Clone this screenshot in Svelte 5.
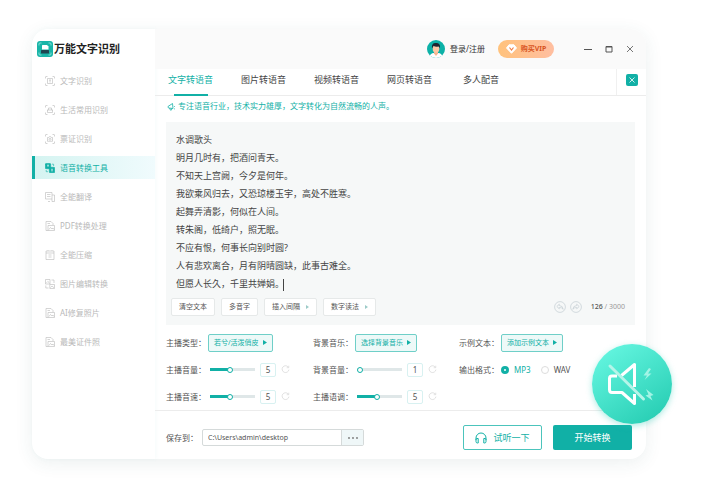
<script>
  const nav = [
    { name: '文字识别', icon: 'text' },
    { name: '生活常用识别', icon: 'life' },
    { name: '票证识别', icon: 'ticket' },
    { name: '语音转换工具', icon: 'voice' },
    { name: '全能翻译', icon: 'translate' },
    { name: 'PDF转换处理', icon: 'file' },
    { name: '全能压缩', icon: 'zip' },
    { name: '图片编辑转换', icon: 'picture' },
    { name: 'AI修复照片', icon: 'file' },
    { name: '最美证件照', icon: 'file' }
  ];
  const tabs = ['文字转语音', '图片转语音', '视频转语音', '网页转语音', '多人配音'];
  const tools = [
    { name: '清空文本', menu: false },
    { name: '多音字', menu: false },
    { name: '插入间隔', menu: true },
    { name: '数字读法', menu: true }
  ];
  let active = $state(3);
  let tab = $state(0);
  let format = $state('MP3');
  let path = $state('C:\\Users\\admin\\desktop');
  let poem = $state(
    [
      '水调歌头',
      '明月几时有，把酒问青天。',
      '不知天上宫阙，今夕是何年。',
      '我欲乘风归去，又恐琼楼玉宇，高处不胜寒。',
      '起舞弄清影，何似在人间。',
      '转朱阁，低绮户，照无眠。',
      '不应有恨，何事长向别时圆?',
      '人有悲欢离合，月有阴晴圆缺，此事古难全。',
      '但愿人长久，千里共婵娟。'
    ].join('\n')
  );
  let levels = $state({ volume: 5, music: 1, speed: 5, tone: 5 });
  const fill = (v) => ((v - 1) / 9) * 100;
</script>

{#snippet slider(id, label)}
  <div class="field">
    <label for={id}>{label}：</label>
    <input
      class="range"
      {id}
      type="range"
      min="1"
      max="10"
      bind:value={levels[id]}
      style="--fill: {fill(levels[id])}%"
    />
    <output class="num" for={id}>{levels[id]}</output>
    <button class="reset" aria-label="重置{label}" onclick={() => (levels[id] = 5)}>
      <svg viewBox="0 0 10 10" width="9" height="9">
        <path d="M8 2.2A3.8 3.8 0 1 0 8.8 5.2M8.6.8V3H6.4" />
      </svg>
    </button>
  </div>
{/snippet}

{#snippet picker(label, value)}
  <div class="field">
    <span class="label">{label}：</span>
    <button class="pick">
      {value}
      <svg viewBox="0 0 4 5" width="4" height="5"><path d="M0 0L4 2.5L0 5Z" fill="currentColor" /></svg>
    </button>
  </div>
{/snippet}

<div class="stage">
  <div class="window">
    <aside>
      <h1>
        <svg viewBox="0 0 16 16" width="16" height="16">
          <rect width="16" height="16" rx="3" fill="#19b5a8" />
          <path d="M2 4.5V3Q2 2 3 2H4.500M11.500 2H13Q14 2 14 3V4.500M2 11.500V13Q2 14 3 14H4.500M11.500 14H13Q14 14 14 13V11.500" fill="none" stroke="#9be6de" stroke-width=".8" />
          <path d="M5 4.500Q5 4 5.500 4H10L11.500 5.500V8.500H5Z" fill="#fff" />
          <rect x="4" y="9" width="8" height="3.500" rx=".6" fill="#1c4550" />
        </svg>
        <span>万能文字识别</span>
      </h1>
      <nav>
        {#each nav as item, i}
          <button class="item" class:on={i === active} onclick={() => (active = i)}>
            <svg viewBox="0 0 10 10" width="10" height="10">
              {#if item.icon === 'text' || item.icon === 'life' || item.icon === 'ticket'}
                <path d="M.5 2.500V1Q.5.5 1 .5H2.500M7.500.5H9Q9.500.5 9.500 1V2.500M9.500 7.500V9Q9.500 9.500 9 9.500H7.500M2.500 9.500H1Q.5 9.500.5 9V7.500" />
                {#if item.icon === 'text'}
                  <path d="M2.500 2.500H7.500V7.500H2.500ZM4 4H6M5 4V6.500" />
                {:else if item.icon === 'life'}
                  <path d="M2.500 5V7.500H7.500V5M2 5H8M3.500 5V3H6.500V5" />
                {:else}
                  <path d="M2.500 3.500H3.700L4.200 2.700H5.800L6.300 3.500H7.500V7.300H2.500Z" />
                  <circle cx="5" cy="5.300" r="1" />
                {/if}
              {:else if item.icon === 'voice'}
                <rect x=".3" y=".5" width="5.400" height="5.200" rx=".8" fill="currentColor" />
                <rect x="4.300" y="4.300" width="5.400" height="5.400" rx=".8" fill="currentColor" />
                <path d="M7 1.200H8.600V3M1.200 7V8.700H3" />
                <path d="M2 2.200H4M3 2.200V4M6 6.300H8M6 7.800H8" stroke="#fff" />
              {:else if item.icon === 'translate'}
                <path d="M7 7V9.500H9.500V3H7M.5.5H7V7H.5ZM2 2.500H5.500M2 4.500H5.500M3 9.500H5" />
              {:else if item.icon === 'zip'}
                <path d="M1 1H9V9.500H1ZM1 3H9M3.500 5H6.500M3.500 7H6.500M3 .2V1M7 .2V1" />
              {:else if item.icon === 'picture'}
                <path d="M.5.5H5V5H.5ZM4.800 5.500H9.500V9.500H4.800ZM6.500 1H9V4M.8 6.500V9H3.500M1.500 3.800L2.800 2.500L4.500 4M5.500 8.500L7 7L9 8.800" />
              {:else}
                <path d="M3 9.500H1V.5H6L8 2.500V4M3 4.500H9.500V9.500H3ZM4 8.500L5.500 6.500L7 8L8 7L9 8.500M2.500 2.500H5" />
              {/if}
            </svg>
            <span>{item.name}</span>
          </button>
        {/each}
      </nav>
    </aside>

    <main>
      <header>
        <button class="user">
          <svg viewBox="0 0 18 18" width="18" height="18">
            <defs><clipPath id="face"><circle cx="9" cy="9" r="9" /></clipPath></defs>
            <g clip-path="url(#face)">
              <rect width="18" height="18" fill="#0cb1a7" />
              <path d="M2 18Q3 13 7 13H11Q15 13 16 18Z" fill="#fff" />
              <path d="M7 10H11V13.500L9 16L7 13.500Z" fill="#f5b590" />
              <ellipse cx="9" cy="8.800" rx="3.300" ry="3.900" fill="#fbc8a5" />
              <path d="M5 8.500Q4.200 3 8.500 3Q13.800 2.500 13 8.500L12 6.500Q8 7 6.500 5.800Q6 7 5 8.500Z" fill="#1d2430" />
            </g>
          </svg>
          登录/注册
        </button>
        <button class="vip">
          <svg viewBox="0 0 11 10" width="11" height="10">
            <path d="M3 .8H8L10.500 4L5.500 9.300L.5 4Z" fill="#fff" stroke="#fff" stroke-linejoin="round" />
            <path d="M3.500 3.500L5.500 6L7.500 3.500" fill="none" stroke="#f07d45" stroke-width="1.200" />
          </svg>
          购买VIP
        </button>
        <div class="controls">
          <button aria-label="最小化"><svg viewBox="0 0 8 8" width="8" height="8"><path d="M0 4.500H8" /></svg></button>
          <button aria-label="最大化"><svg viewBox="0 0 8 8" width="8" height="8"><path d="M1 1.500H7V7H1ZM1 2H7" /></svg></button>
          <button aria-label="关闭"><svg viewBox="0 0 8 8" width="8" height="8"><path d="M1 1L7 7M7 1L1 7" stroke-width=".8" /></svg></button>
        </div>
      </header>

      <div class="tabbar">
        <div class="tabs" role="tablist">
          {#each tabs as t, i}
            <button role="tab" class="tab" aria-selected={i === tab} class:on={i === tab} onclick={() => (tab = i)}>{t}</button>
          {/each}
        </div>
        <div class="closecell">
          <button class="closetab" aria-label="关闭标签">
            <svg viewBox="0 0 6 6" width="6" height="6"><path d="M.5.5L5.500 5.500M5.500.5L.5 5.500" /></svg>
          </button>
        </div>
      </div>

      <p class="notice">
        <svg viewBox="0 0 9 9" width="9" height="9">
          <path d="M1 5Q1 4 2 3.800L5.500 1.500L6 6.500L2 6Q1 6 1 5ZM2.500 6.200L3.500 8.200L4.700 7.800L4.200 6.400M7.500 4V4.800M7.500 6.500V7.300" />
        </svg>
        专注语音行业，技术实力雄厚，文字转化为自然流畅的人声。
      </p>

      <section class="editor">
        <div class="paper">
          <textarea aria-label="文本内容" rows="9" spellcheck="false" bind:value={poem}></textarea>
          <i class="caret"></i>
        </div>
        <div class="tools">
          {#each tools as t}
            <button class="tool">
              {t.name}
              {#if t.menu}
                <svg viewBox="0 0 3 4" width="3" height="4"><path d="M0 0L3 2L0 4Z" fill="#9ccbc8" /></svg>
              {/if}
            </button>
          {/each}
          <span class="grow"></span>
          <button class="hist" aria-label="撤销">
            <svg viewBox="0 0 12 12" width="12" height="12">
              <circle cx="6" cy="6" r="5.400" />
              <path d="M5.300 3.200L2.800 5.500L5.300 7.800V6.500Q7.800 6.300 9.200 8.300Q9 4.800 5.300 4.500Z" />
            </svg>
          </button>
          <button class="hist" aria-label="重做">
            <svg viewBox="0 0 12 12" width="12" height="12">
              <circle cx="6" cy="6" r="5.400" />
              <path d="M6.700 3.200L9.200 5.500L6.700 7.800V6.500Q4.200 6.300 2.800 8.300Q3 4.800 6.700 4.500Z" />
            </svg>
          </button>
          <span class="count"><b>126</b> / 3000</span>
        </div>
      </section>

      <section class="settings">
        {@render picker('主播类型', '若兮/活泼俏皮')}
        {@render picker('背景音乐', '选择背景音乐')}
        {@render picker('示例文本', '添加示例文本')}
        {@render slider('volume', '主播音量')}
        {@render slider('music', '背景音量')}
        <div class="field" role="radiogroup" aria-label="输出格式">
          <span class="label">输出格式：</span>
          {#each ['MP3', 'WAV'] as f}
            <label class="radio" class:on={format === f}>
              <input type="radio" name="format" value={f} bind:group={format} />{f}
            </label>
          {/each}
        </div>
        {@render slider('speed', '主播音速')}
        {@render slider('tone', '主播语调')}
      </section>

      <footer>
        <label for="path">保存到：</label>
        <div class="path">
          <input id="path" type="text" bind:value={path} />
          <button aria-label="浏览">
            <svg viewBox="0 0 10 2" width="10" height="2"><circle cx="1" cy="1" r=".9" /><circle cx="5" cy="1" r=".9" /><circle cx="9" cy="1" r=".9" /></svg>
          </button>
        </div>
        <span class="grow"></span>
        <button class="listen">
          <svg viewBox="0 0 12 12" width="12" height="12">
            <path d="M1 8V6A5 5 0 0 1 11 6V8M1 7.500Q1 6.500 2 6.500H3.200V11H2.500Q1 11 1 9.500ZM11 7.500Q11 6.500 10 6.500H8.800V11H9.500Q11 11 11 9.500Z" />
          </svg>
          试听一下
        </button>
        <button class="start">开始转换</button>
      </footer>
    </main>

    <button class="mute" aria-label="静音">
      <svg viewBox="0 0 80 80" width="80" height="80">
        <path d="M25 32H20Q17.500 32 17.500 34.500V45.500Q17.500 48.500 20 48.500H30L42.500 59.500V50M29.500 31.500L42.500 20.500V43" fill="none" stroke="#fff" stroke-width="3" stroke-linejoin="round" />
        <path d="M18 22L51.500 55" stroke="#b5f5e9" stroke-width="3" stroke-linecap="round" />
        <path d="M57 24L51.500 31.500H55L52.500 36L59.500 29.500H56L59 25ZM54 45L56.500 50.500L53.500 51.500L60.500 56.500L58.500 52L61.500 51Z" fill="#a2f4e5" />
      </svg>
    </button>
  </div>
</div>

<style>
  :global(body) {
    background: #fff;
  }
  .stage,
  .stage :global(*) {
    box-sizing: border-box;
  }
  .stage {
    --teal: #11b0a6;
    padding: 29px 60px 37px 32px;
    font: 8px/12px 'Noto Sans', 'Noto Sans CJK SC', sans-serif;
    color: #555;
  }
  button,
  input,
  textarea {
    font: inherit;
    color: inherit;
    margin: 0;
    padding: 0;
    border: 0;
    background: none;
    outline: 0;
  }
  button {
    display: flex;
    align-items: center;
    justify-content: center;
    white-space: nowrap;
    cursor: pointer;
  }
  svg {
    flex: none;
    display: block;
  }
  .grow {
    flex: 1;
  }
  .window {
    position: relative;
    display: flex;
    border-radius: 16px;
    background: #fff;
    box-shadow: 0 4px 18px rgba(40, 90, 85, 0.09);
  }
  aside {
    flex: none;
    width: 123px;
    border-radius: 16px 0 0 16px;
    box-shadow: 1px 0 4px rgba(80, 180, 190, 0.06);
  }
  h1 {
    display: flex;
    align-items: center;
    gap: 1px;
    height: 37px;
    margin: 0;
    padding: 3px 0 0 5px;
    font-size: 11px;
    line-height: 16px;
    color: #222;
    white-space: nowrap;
  }
  .item {
    width: 100%;
    height: 23px;
    margin-bottom: 6px;
    padding-left: 10px;
    justify-content: flex-start;
    gap: 5px;
    color: #b9b9b9;
    border-left: 3px solid transparent;
  }
  nav {
    padding-top: 3px;
  }
  .item svg {
    fill: none;
    stroke: currentColor;
    stroke-width: 0.6;
  }
  .item.on {
    color: var(--teal);
    border-left-color: var(--teal);
    background: linear-gradient(90deg, #d5f4f1, #f0fbfd);
  }
  main {
    flex: 1;
    min-width: 0;
    display: flex;
    flex-direction: column;
  }
  header {
    display: flex;
    align-items: center;
    justify-content: flex-end;
    height: 40px;
    padding-right: 12px;
    background: #fafafa;
    border-radius: 0 16px 0 0;
  }
  .user {
    gap: 5px;
    color: #333;
  }
  .vip {
    width: 56px;
    height: 18px;
    margin: 0 30px 0 13px;
    gap: 4px;
    border-radius: 9px;
    background: linear-gradient(90deg, #ffc27c, #ffbea0);
    color: #d8541f;
    font-size: 7px;
    font-weight: 700;
  }
  .controls {
    display: flex;
    gap: 13px;
  }
  .controls svg {
    fill: none;
    stroke: #555;
  }
  .tabbar {
    display: flex;
    height: 27px;
    border-bottom: 1px solid #ececec;
  }
  .tabs {
    flex: 1;
    display: flex;
    gap: 28px;
    padding-left: 13px;
  }
  .tab {
    position: relative;
    padding-bottom: 4px;
    font-size: 9px;
    color: #444;
  }
  .tab:last-child {
    margin-left: 3px;
  }
  .tab.on {
    color: var(--teal);
  }
  .tab.on::after {
    content: '';
    position: absolute;
    left: 6px;
    right: 5px;
    bottom: -1px;
    height: 2px;
    background: var(--teal);
  }
  .closecell {
    width: 30px;
    padding: 5px 0 0 9px;
    border-left: 1px solid #f0f0f0;
  }
  .closetab {
    width: 12px;
    height: 12px;
    border-radius: 2px;
    background: var(--teal);
  }
  .closetab svg {
    stroke: #fff;
    stroke-width: 0.8;
  }
  .notice {
    display: flex;
    align-items: center;
    gap: 2px;
    height: 20px;
    margin: 0 12px;
    color: var(--teal);
    white-space: nowrap;
  }
  .notice svg {
    fill: none;
    stroke: currentColor;
    stroke-width: 0.8;
  }
  .editor {
    margin: 6px 11px 0 11px;
    padding: 9px 10px 9px 5px;
    background: #f6f8f8;
  }
  .paper {
    position: relative;
    padding-left: 5px;
  }
  textarea {
    display: block;
    width: 100%;
    height: 163px;
    font-size: 9px;
    line-height: 18px;
    resize: none;
    overflow: hidden;
    color: #444;
  }
  .caret {
    position: absolute;
    left: 112px;
    bottom: 3px;
    width: 1px;
    height: 12px;
    background: #444;
  }
  .tools {
    display: flex;
    align-items: center;
    gap: 6px;
    padding-top: 4px;
    font-size: 7px;
  }
  .tool {
    height: 18px;
    padding: 0 7px;
    gap: 6px;
    border: 1px solid #e6e9e9;
    border-radius: 2px;
    background: #fff;
  }
  .hist {
    margin-right: -2px;
  }
  .hist svg {
    fill: none;
    stroke: #c3cdd2;
    stroke-width: 0.7;
  }
  .count {
    margin-left: 5px;
    color: #999;
    white-space: nowrap;
  }
  .count b {
    font-weight: 500;
    color: #555;
  }
  .settings {
    display: grid;
    grid-template-columns: 147px 146px 1fr;
    grid-auto-rows: 27px;
    padding: 4px 0 0 11px;
    border-bottom: 1px solid #ececec;
  }
  .field {
    display: flex;
    align-items: center;
    white-space: nowrap;
  }
  .field > label:first-child,
  .label {
    width: 42px;
  }
  .pick {
    height: 18px;
    padding: 0 5px;
    gap: 4px;
    border: 1px solid #6fcfc8;
    border-radius: 2px;
    background: #edf9f8;
    color: var(--teal);
    font-size: 7px;
  }
  .range {
    appearance: none;
    width: 45px;
    height: 8px;
    margin: 0 5px 0 2px;
    background: linear-gradient(90deg, var(--teal) var(--fill), #dfe7e8 var(--fill)) center / 100% 3px no-repeat;
  }
  .range::-webkit-slider-thumb {
    appearance: none;
    width: 6px;
    height: 6px;
    border: 1px solid var(--teal);
    border-radius: 50%;
    background: #fff;
  }
  .num {
    width: 16px;
    height: 14px;
    border: 1px solid #d8f1f1;
    border-radius: 2px;
    text-align: center;
  }
  .reset {
    margin-left: 5px;
  }
  .reset svg {
    fill: none;
    stroke: #d0d0d0;
    stroke-width: 0.7;
  }
  .radio {
    display: flex;
    align-items: center;
    gap: 5px;
    margin-right: 10px;
  }
  .radio.on {
    color: var(--teal);
  }
  .radio input {
    appearance: none;
    width: 8px;
    height: 8px;
    border: 1px solid #ddd;
    border-radius: 50%;
  }
  .radio input:checked {
    border: 3px solid var(--teal);
  }
  footer {
    display: flex;
    align-items: center;
    height: 48px;
    padding: 5px 14px 0 11px;
  }
  footer > label {
    width: 36px;
    white-space: nowrap;
  }
  .path {
    display: flex;
    width: 162px;
    height: 17px;
    border: 1px solid #d5dada;
    border-radius: 2px;
  }
  .path input {
    flex: 1;
    min-width: 0;
    padding-left: 5px;
    font-size: 7px;
  }
  .path button {
    width: 22px;
    background: #eff7f8;
    border-left: 1px solid #d5dada;
  }
  .path svg {
    fill: #777;
  }
  .listen,
  .start {
    height: 25px;
    width: 79px;
    border-radius: 2px;
    font-size: 9px;
  }
  .listen {
    gap: 6px;
    border: 1px solid #4cc4bc;
    color: var(--teal);
  }
  .listen svg {
    fill: none;
    stroke: currentColor;
  }
  .start {
    margin-left: 11px;
    background: var(--teal);
    color: #fff;
  }
  .mute {
    position: absolute;
    right: -26px;
    bottom: 35px;
    width: 80px;
    height: 80px;
    border-radius: 50%;
    background: linear-gradient(145deg, #63f5df 10%, #28ceb4 90%);
    box-shadow: 0 2px 6px rgba(50, 205, 185, 0.4);
  }
</style>
